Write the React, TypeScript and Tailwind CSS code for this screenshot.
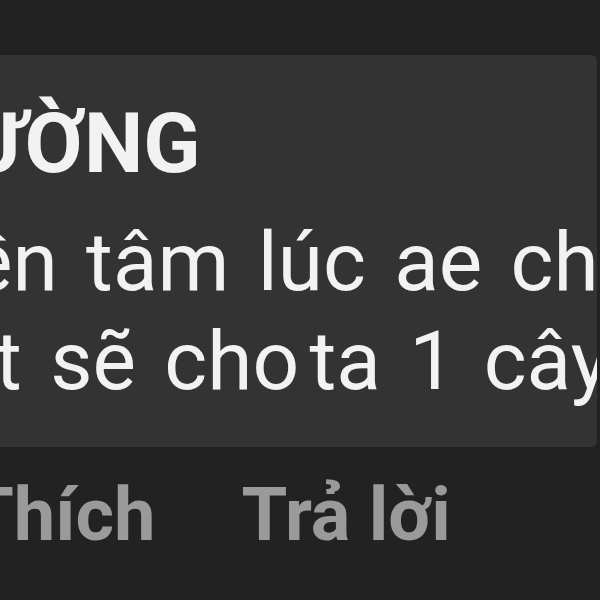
export default function App() {
  return (
    <div className="flex h-[600px] w-[600px] flex-col overflow-hidden bg-[#222222] font-['Roboto','Noto_Sans',sans-serif]">
      <div className="h-[55px] shrink-0" />
      <div className="mr-[3px] h-[392px] shrink-0 overflow-hidden rounded-r-[6px] bg-[#333333]">
        <div className="ml-[-35px] mt-[39px] whitespace-nowrap text-[84px] font-bold leading-[100px] text-[#f2f2f2]">
          ƯỜNG
        </div>
        <div className="mt-[19px] text-[82px] leading-[99px] text-[#f2f2f2] [word-spacing:8px]">
          <div className="ml-[-31px] whitespace-nowrap">ền tâm lúc ae ch</div>
          <div className="ml-[-5px] whitespace-nowrap">
            t sẽ <span className="[word-spacing:-10px]">cho ta</span> 1 cây
          </div>
        </div>
      </div>
      <div className="flex whitespace-nowrap pt-[28px] text-[74px] font-bold leading-[80px] text-[#9a9a9a]">
        <span className="ml-[-32px]">Thích</span>
        <span className="ml-[86px]">Trả lời</span>
      </div>
    </div>
  );
}
